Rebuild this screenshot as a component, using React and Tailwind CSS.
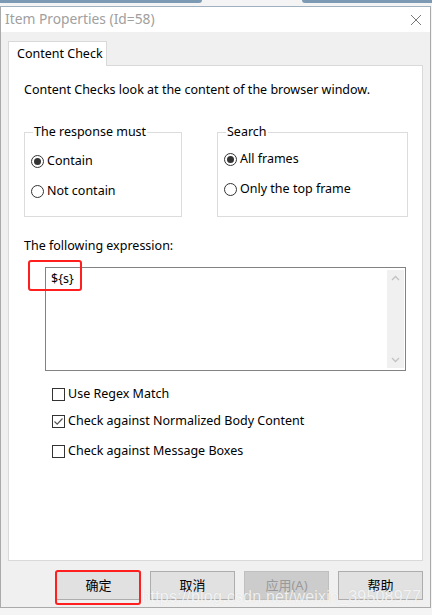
import React from 'react';

const font = { fontFamily: '"Noto Sans", "Noto Sans CJK SC", sans-serif' };

// Windows-style radio button
const Radio = ({ checked, label }) => (
  <div className="flex items-center gap-[3px] h-[16px]">
    <span className="w-[13px] h-[13px] rounded-full border border-[#333] bg-white flex items-center justify-center">
      {checked && <span className="w-[7px] h-[7px] rounded-full bg-[#333]" />}
    </span>
    <span>{label}</span>
  </div>
);

// Windows-style checkbox
const Check = ({ checked, label }) => (
  <div className="flex items-center gap-[3px] h-[16px]">
    <span className="w-[13px] h-[13px] border border-[#333] bg-white flex items-center justify-center">
      {checked && (
        <svg width="11" height="11" viewBox="0 0 11 11">
          <path d="M1.5 5.5 L4.2 8.2 L9.5 2.5" fill="none" stroke="#555" strokeWidth="1.2" />
        </svg>
      )}
    </span>
    <span>{label}</span>
  </div>
);

const GroupBox = ({ title, className, children }) => (
  <div className={`relative border border-[#dcdcdc] ${className}`}>
    <span className="absolute -top-[9px] left-[8px] bg-white px-[1px] leading-[16px]">{title}</span>
    {children}
  </div>
);

const Button = ({ children, disabled }) => (
  <button
    className={`w-[85px] h-[29px] border text-[13px] ${
      disabled ? 'bg-[#cccccc] border-[#bfbfbf] text-[#9a9a9a]' : 'bg-[#e1e1e1] border-[#adadad] text-black'
    }`}
  >
    {children}
  </button>
);

export default function App() {
  return (
    <div className="w-[432px] h-[615px] bg-[#f4f4f4] relative overflow-hidden text-[12.5px] text-black" style={font}>
      {/* background window strip */}
      <div className="h-[6px] flex items-start">
        <div className="w-[202px] h-[3px] bg-[#7d9ab4] rounded-br-[3px]" />
        <div className="flex-1" />
        <div className="w-[130px] h-[3px] bg-[#7d9ab4] rounded-bl-[3px]" />
      </div>

      <div className="w-[431px] h-[602px] border border-[#aaaaaa] border-t-[#9fb0c0] flex flex-col">
        {/* title bar */}
        <div className="h-[25px] bg-white flex items-center justify-between pl-[4px] pr-[8px]">
          <span className="text-[#a0a0a0] text-[13.8px]">Item Properties (Id=58)</span>
          <svg width="12" height="12" viewBox="0 0 12 12">
            <path d="M1 1 L11 11 M11 1 L1 11" stroke="#7a7a7a" strokeWidth="1" />
          </svg>
        </div>

        {/* body */}
        <div className="flex-1 bg-[#f0f0f0] pt-[9px] px-[7px] flex flex-col">
          <div className="flex">
            <div className="w-[99px] h-[25px] bg-white border border-[#d9d9d9] border-b-0 pl-[8px] flex items-center relative z-10 -mb-px">
              Content Check
            </div>
          </div>
          <div className="h-[496px] bg-white border border-[#d9d9d9] pl-[15px] pt-[15px] pr-[14px]">
            <div className="leading-[18px]">Content Checks look at the content of the browser window.</div>

            <div className="flex gap-[35px] mt-[33px]">
              <GroupBox title="The response must" className="w-[158px] h-[85px] pl-[6px] pt-[20px]">
                <div className="flex flex-col gap-[14px]">
                  <Radio checked label="Contain" />
                  <Radio label="Not contain" />
                </div>
              </GroupBox>
              <GroupBox title="Search" className="w-[191px] h-[85px] pl-[6px] pt-[18px]">
                <div className="flex flex-col gap-[14px]">
                  <Radio checked label="All frames" />
                  <Radio label="Only the top frame" />
                </div>
              </GroupBox>
            </div>

            <div className="mt-[20px] leading-[18px]">The following expression:</div>

            <div className="relative ml-[21px] mt-[12px] w-[361px] h-[104px] border border-[#828282] bg-white flex">
              <div className="flex-1 pl-[5px] pt-[2px] leading-[18px]">{'${s}'}</div>
              <div className="w-[17px] my-[2px] mr-[1px] bg-[#f0f0f0] flex flex-col justify-between items-center py-[5px]">
                <svg width="9" height="6" viewBox="0 0 9 6">
                  <path d="M1 5 L4.5 1.5 L8 5" fill="none" stroke="#c2c2c2" strokeWidth="1.3" />
                </svg>
                <svg width="9" height="6" viewBox="0 0 9 6">
                  <path d="M1 1 L4.5 4.5 L8 1" fill="none" stroke="#c2c2c2" strokeWidth="1.3" />
                </svg>
              </div>
              {/* red highlight */}
              <div className="absolute -left-[18px] -top-[8px] w-[54px] h-[31px] border-[2px] border-[#ff1f1f] rounded-[3px]" />
            </div>

            <div className="ml-[28px] mt-[15px] flex flex-col gap-[11px]">
              <Check label="Use Regex Match" />
              <Check checked label="Check against Normalized Body Content" />
              <div className="mt-[3px]">
                <Check label="Check against Message Boxes" />
              </div>
            </div>
          </div>

          {/* buttons */}
          <div className="flex justify-end gap-[9px] mt-[10px] relative">
            <div className="relative">
              <Button>确定</Button>
              <div className="absolute -left-[1px] -top-[1px] w-[86px] h-[35px] border-[2px] border-[#ff1f1f] rounded-[3px]" />
            </div>
            <Button>取消</Button>
            <Button disabled>应用(A)</Button>
            <Button>帮助</Button>
            <span className="absolute right-[2px] top-[14px] text-[16px] text-white/80 tracking-[0.2px] pointer-events-none" style={{ fontFamily: '"Liberation Sans", sans-serif', textShadow: '0 0 1px rgba(0,0,0,0.15)' }}>
              https://blog.csdn.net/weixin_39508977
            </span>
          </div>
        </div>
      </div>
    </div>
  );
}
